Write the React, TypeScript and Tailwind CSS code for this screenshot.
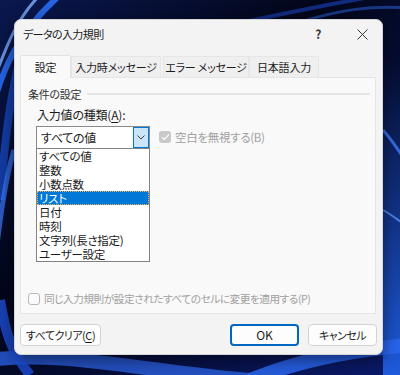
import React from 'react';

// データの入力規則 ダイアログ (Excel / Windows 11)

const jp = "font-['Yu_Gothic_UI','Noto_Sans_CJK_JP',sans-serif] [font-feature-settings:'palt']";

const items = ['すべての値', '整数', '小数点数', 'リスト', '日付', '時刻', '文字列(長さ指定)', 'ユーザー設定'];

function Wallpaper() {
  return (
    <svg className="absolute inset-0" width="400" height="375" viewBox="0 0 400 375">
      <defs>
        <linearGradient id="bg" x1="0" y1="0" x2="1" y2="1">
          <stop offset="0" stopColor="#0a1850" />
          <stop offset="0.4" stopColor="#03061a" />
          <stop offset="1" stopColor="#0a1a6a" />
        </linearGradient>
        <linearGradient id="blueR" x1="0" y1="0" x2="0" y2="1">
          <stop offset="0" stopColor="#050c30" />
          <stop offset="1" stopColor="#1f5ce0" />
        </linearGradient>
      </defs>
      <rect width="400" height="375" fill="url(#bg)" />
      {/* top-left streaks */}
      <path d="M-10 120 C 0 70, 20 30, 60 -5" stroke="#2a6cf0" strokeWidth="6" fill="none" opacity="0.9" />
      <path d="M-10 90 C 5 50, 15 20, 40 -5" stroke="#7fb0ff" strokeWidth="3" fill="none" opacity="0.8" />
      <path d="M0 200 C 5 140, 10 90, 25 40" stroke="#1a4fd0" strokeWidth="8" fill="none" opacity="0.7" />
      <path d="M-5 260 C 0 220, 5 180, 14 150" stroke="#3a7bff" strokeWidth="5" fill="none" opacity="0.7" />
      {/* top-right streaks */}
      <path d="M230 25 C 300 10, 350 0, 410 -10" stroke="#1b45c0" strokeWidth="4" fill="none" opacity="0.6" />
      <path d="M300 22 C 340 10, 370 5, 410 8" stroke="#2d65e8" strokeWidth="3" fill="none" opacity="0.5" />
      {/* right side */}
      <rect x="383" y="60" width="20" height="320" fill="url(#blueR)" />
      <path d="M383 130 C 392 140, 398 150, 405 160" stroke="#3f7cff" strokeWidth="3" fill="none" opacity="0.8" />
      <path d="M383 210 C 392 215, 398 220, 405 225" stroke="#5d95ff" strokeWidth="2" fill="none" opacity="0.8" />
      {/* bottom */}
      <path d="M-10 360 C 60 350, 150 372, 250 380" stroke="#2b5fe0" strokeWidth="14" fill="none" opacity="0.8" />
      <path d="M250 380 C 300 360, 350 350, 410 345" stroke="#2a66f0" strokeWidth="14" fill="none" opacity="0.85" />
      <path d="M0 300 C 5 330, 10 350, 30 375" stroke="#1e4fd8" strokeWidth="10" fill="none" opacity="0.8" />
    </svg>
  );
}

function Check() {
  return (
    <svg width="9" height="8" viewBox="0 0 9 8">
      <path d="M1 4.2 L3.4 6.4 L8 1.4" stroke="#ffffff" strokeWidth="1.2" fill="none" />
    </svg>
  );
}

export default function App() {
  return (
    <div className={`relative w-[400px] h-[375px] overflow-hidden ${jp} text-[11px] tracking-[-0.3px] whitespace-nowrap text-[#1b1b1b]`}>
      <Wallpaper />

      <div className="relative pt-[19px] pl-[14px]">
        <div className="w-[369px] h-[336px] rounded-[7px] bg-[#f3f3f3] shadow-[0_4px_16px_rgba(0,0,0,0.5)] border border-[#d6d6d6] flex flex-col">
          {/* タイトルバー */}
          <div className="h-[28px] flex items-center pl-[8px] pr-[14px] leading-[14px]">
            <span className="text-[#1a1a1a] tracking-[-0.6px]">データの入力規則</span>
            <span className="ml-auto mr-[36px] text-[12px] font-semibold text-[#333]">?</span>
            <svg width="11" height="11" viewBox="0 0 11 11">
              <path d="M0.5 0.5 L10.5 10.5 M10.5 0.5 L0.5 10.5" stroke="#333" strokeWidth="1" />
            </svg>
          </div>

          {/* タブ */}
          <div className="mt-[7px] ml-[5px] flex items-end h-[22px] text-[11px] tracking-[-0.2px]">
            <div className="relative z-10 w-[51px] h-[23px] -mb-px bg-[#f9f9f9] border border-b-0 border-[#e3e3e3] rounded-t-[2px] flex items-center justify-center leading-[14px]">
              設定
            </div>
            <div className="w-[90px] h-[21px] bg-[#efefef] border border-b-0 border-[#e6e6e6] flex items-center justify-center leading-[14px]">
              入力時メッセージ
            </div>
            <div className="ml-[2px] w-[86px] h-[21px] bg-[#efefef] border border-b-0 border-[#e6e6e6] flex items-center justify-center leading-[14px]">
              エラー メッセージ
            </div>
            <div className="w-[70px] h-[21px] bg-[#efefef] border border-b-0 border-[#e6e6e6] flex items-center justify-center leading-[14px]">
              日本語入力
            </div>
          </div>

          {/* パネル */}
          <div className="ml-[5px] w-[356px] h-[237px] bg-[#f9f9f9] border border-[#e5e5e5] flex flex-col pt-[9px]">
            <div className="flex items-center pl-[7px] pr-[5px] h-[14px] leading-[14px]">
              <span className="text-[#333]">条件の設定</span>
              <div className="flex-1 ml-[6px] h-[2px] bg-[#e4e4e4]" />
            </div>

            <div className="mt-[7px] pl-[16px] h-[14px] leading-[14px] text-[12px] tracking-[-0.2px]">
              入力値の種類(<span className="underline underline-offset-2">A</span>):
            </div>

            <div className="mt-[4px] pl-[15px] flex items-start">
              <div className="flex flex-col">
                <div className="w-[114px] h-[23px] bg-white border border-[#8a8a8a] flex items-center">
                  <span className="pl-[4px] flex-1 leading-[14px] text-[12px]">すべての値</span>
                  <div className="w-[16px] h-[21px] bg-[#cce4f7] border border-[#0078d7] flex items-center justify-center">
                    <svg width="8" height="5" viewBox="0 0 8 5">
                      <path d="M0.5 0.5 L4 4 L7.5 0.5" stroke="#444" strokeWidth="1" fill="none" />
                    </svg>
                  </div>
                </div>
                <div className="w-[114px] h-[114px] -mt-px bg-white border border-[#828282] overflow-hidden text-[11.5px]">
                  {items.map((it) => (
                    <div
                      key={it}
                      className={
                        it === 'リスト'
                          ? 'h-[14px] leading-[12px] pl-[1px] bg-[#0078d7] text-white border border-dotted border-[#f3b35a]'
                          : 'h-[14px] leading-[14px] pl-[2px]'
                      }
                    >
                      {it}
                    </div>
                  ))}
                </div>
              </div>

              <div className="ml-[9px] mt-[4px] flex items-center text-[#a0a0a0]">
                <div className="w-[12px] h-[12px] rounded-[3px] bg-[#c8c8c8] flex items-center justify-center">
                  <Check />
                </div>
                <span className="ml-[4px] leading-[14px] text-[11.5px]">空白を無視する(B)</span>
              </div>
            </div>

            <div className="mt-[30px] pl-[7px] flex items-center text-[#a0a0a0]">
              <div className="w-[12px] h-[12px] rounded-[3px] border border-[#b8b8b8] bg-[#fbfbfb]" />
              <span className="ml-[4px] leading-[14px] text-[10.7px] tracking-[-0.5px]">同じ入力規則が設定されたすべてのセルに変更を適用する(P)</span>
            </div>
          </div>

          {/* ボタン */}
          <div className="mt-[10px] px-[5px] flex items-center text-[11px] tracking-[-0.5px]">
            <button className="w-[81px] h-[22px] bg-[#fdfdfd] border border-[#d3d3d3] rounded-[4px] leading-[14px]">
              すべてクリア(<span className="underline underline-offset-2">C</span>)
            </button>
            <button className="ml-auto w-[69px] h-[22px] bg-[#fdfdfd] border-2 border-[#0067c0] rounded-[4px] leading-[14px] text-[12px] tracking-normal">
              OK
            </button>
            <button className="ml-[9px] w-[69px] h-[22px] bg-[#fdfdfd] border border-[#d3d3d3] rounded-[4px] leading-[14px]">
              キャンセル
            </button>
          </div>
        </div>
      </div>
    </div>
  );
}
